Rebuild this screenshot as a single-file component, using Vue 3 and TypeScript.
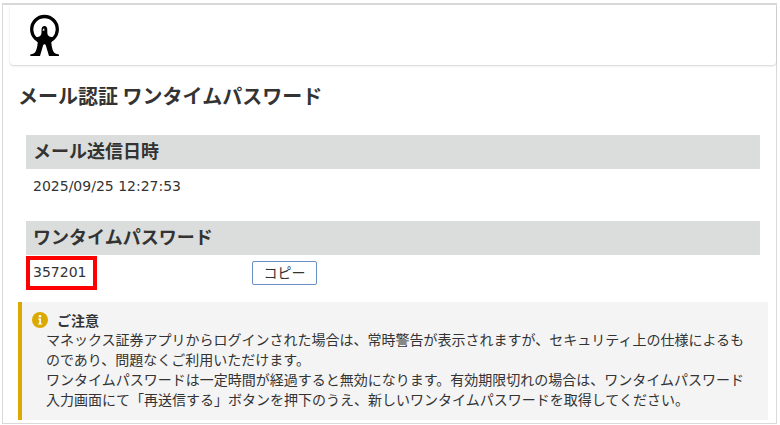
<script setup lang="ts">
import { ref } from 'vue'

const sentAt = ref('2025/09/25 12:27:53')
const code = ref('357201')

const notices: string[] = [
  'マネックス証券アプリからログインされた場合は、常時警告が表示されますが、セキュリティ上の仕様によるものであり、問題なくご利用いただけます。',
  'ワンタイムパスワードは一定時間が経過すると無効になります。有効期限切れの場合は、ワンタイムパスワード入力画面にて「再送信する」ボタンを押下のうえ、新しいワンタイムパスワードを取得してください。',
]

function copyCode(): void {
  navigator.clipboard?.writeText(code.value)
}
</script>

<template>
  <div class="page">
    <header class="header">
      <svg class="logo" viewBox="0 0 30 42" aria-hidden="true">
        <circle cx="14.500" cy="15.300" r="12.800" fill="none" stroke="#000" stroke-width="3.300" />
        <path
          d="M11.500 16c0-2.800 1.200-4 3-4 1.900 0 2.800 1.500 2.800 4v2.500c0 2.500 1.200 4 4 4.500l3 .3-3 5c.2 4 1 7 2.200 9.500.8 1.600 2.500 2.200 5.500 2.700V42H19l-3-10c-.3-1.200-.7-1.800-1.500-1.800s-1.300.6-1.600 1.800L10 42H.3v-1.500c2.800-.5 4.400-1.200 5.200-2.700 1.300-2.500 2-5.500 2.200-9.500l-3-5 3-.3c2.600-.5 3.800-2 3.800-4.500z"
          fill="#000"
        />
        <path d="M12.300 16.500l1.800-2.500.4 2.800z" fill="#fff" />
      </svg>
    </header>

    <main class="main">
      <h1 class="title">メール認証 ワンタイムパスワード</h1>

      <section class="block">
        <h2 class="bar">メール送信日時</h2>
        <div class="row">
          <span class="value">{{ sentAt }}</span>
        </div>
      </section>

      <section class="block">
        <h2 class="bar">ワンタイムパスワード</h2>
        <div class="row">
          <div class="cell">
            <output class="value marked">{{ code }}</output>
          </div>
          <button class="copy" type="button" @click="copyCode">コピー</button>
        </div>
      </section>

      <aside class="notice">
        <h3 class="notice-title">
          <svg class="info" viewBox="0 0 16 16" aria-hidden="true">
            <circle cx="8" cy="8" r="8" fill="#dba900" />
            <circle cx="8" cy="4.300" r="1.300" fill="#fff" />
            <path d="M6 6.500h3v5h1.200v1H6v-1h1.200v-4H6z" fill="#fff" />
          </svg>
          ご注意
        </h3>
        <p v-for="text in notices" :key="text" class="notice-text">{{ text }}</p>
      </aside>
    </main>
  </div>
</template>

<style>
body {
  background: #fff;
}
</style>

<style scoped>
.page {
  margin: 3px 3px 0 2px;
  border: 1px solid #d9d9d9;
  border-top-width: 2px;
  padding-bottom: 3px;
  background: #fff;
  color: #333;
  font-family: 'Noto Sans CJK JP', sans-serif;
  font-size: 14px;
  line-height: 20px;
}

.header {
  display: flex;
  align-items: center;
  height: 60px;
  margin-left: 7px;
  padding-left: 20px;
  border-radius: 0 0 4px 4px;
  box-shadow: 0 1px 2px rgba(0, 0, 0, 0.18);
  box-sizing: border-box;
}

.logo {
  width: 30px;
  height: 42px;
}

.main {
  padding: 16px 8px 0 15px;
}

.title {
  margin: 0 0 24px;
  font-size: 20px;
  line-height: 30px;
  font-weight: 700;
}

.block {
  margin: 0 8px 16px;
}

.bar {
  margin: 0;
  padding: 0 7px 4px;
  background: #dadddc;
  font-size: 18px;
  line-height: 30px;
  font-weight: 700;
}

.row {
  display: flex;
  align-items: center;
  min-height: 36px;
}

.value {
  padding: 0 7px 2px;
  font-family: 'DejaVu Sans', sans-serif;
  line-height: 24px;
}

.cell {
  display: flex;
  flex: 0 0 226px;
}

.marked {
  padding: 0 7px 2px 3px;
  border: 4px solid #f00;
}

.copy {
  width: 65px;
  height: 24px;
  padding: 0 0 2px;
  border: 1px solid #6a8fc5;
  border-radius: 2px;
  background: #fff;
  color: #333;
  font: inherit;
  line-height: 20px;
  cursor: pointer;
}

.notice {
  margin-top: -5px;
  padding: 8px 20px 11px 24px;
  border-left: 4px solid #dba900;
  background: #f4f4f4;
}

.notice-title {
  display: flex;
  align-items: center;
  gap: 9px;
  margin: 0 0 -1px -14px;
  font-size: 14px;
  line-height: 20px;
  font-weight: 700;
}

.info {
  width: 16px;
  height: 16px;
}

.notice-text {
  margin: 0;
}
</style>
